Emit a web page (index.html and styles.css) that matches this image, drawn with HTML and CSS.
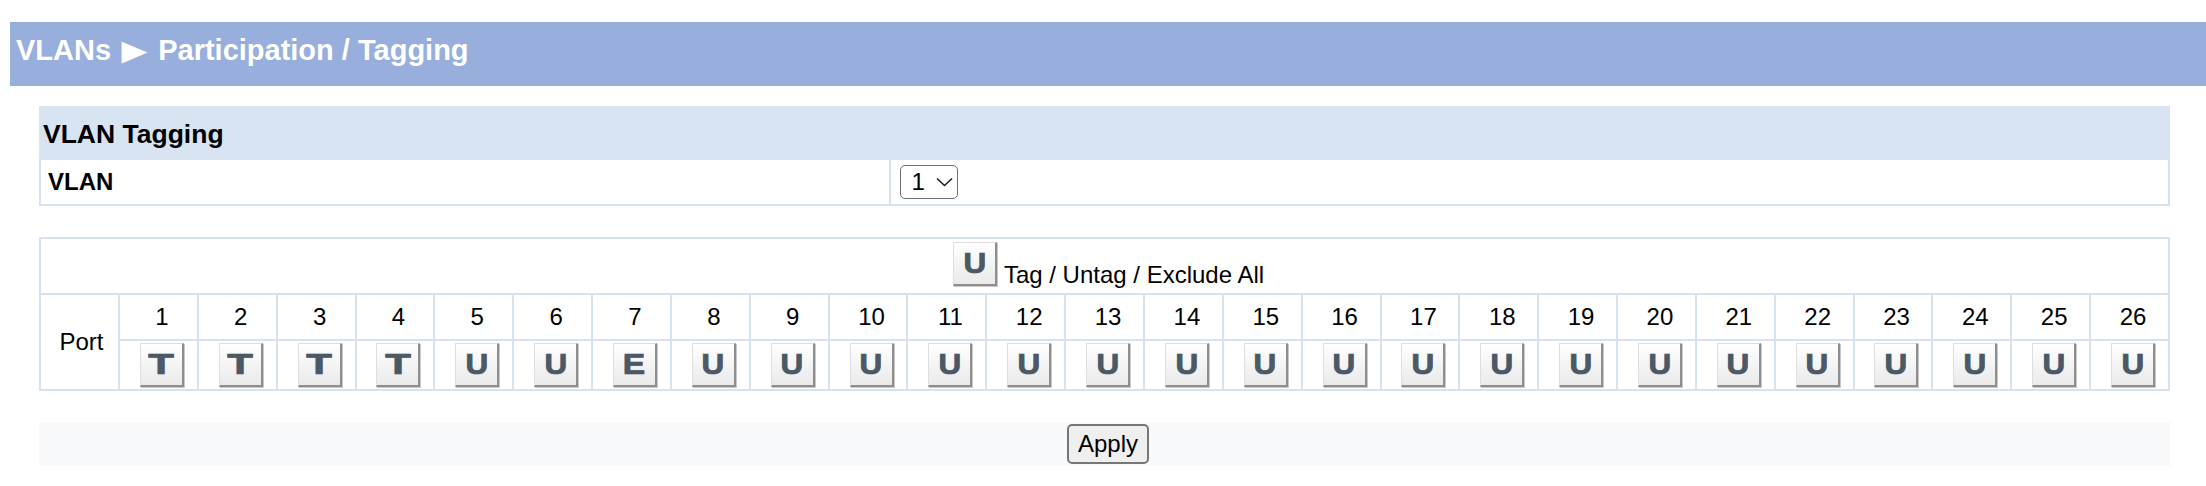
FILE: index.html
```html
<!DOCTYPE html>
<html lang="en">
<head>
<meta charset="utf-8">
<title>VLANs - Participation / Tagging</title>
<link rel="stylesheet" href="styles.css">
</head>
<body>
<h1 class="page-title">VLANs<span class="sep">▶</span>Participation / Tagging</h1>
<div class="content">
  <table class="panel">
    <tr><th colspan="2" class="panel-title">VLAN Tagging</th></tr>
    <tr>
      <td class="label">VLAN</td>
      <td class="value"><span class="select"><span class="select-text">1</span><svg class="chev" width="17" height="10" viewBox="0 0 17 10"><polyline points="1,1.5 8.5,8.5 16,1.5" fill="none" stroke="#1d1d1d" stroke-width="1.6"/></svg></span></td>
    </tr>
  </table>

  <table class="ports">
    <colgroup><col class="port-col"><col span="26"></colgroup>
    <tr>
      <td colspan="27" class="all"><span class="tbtn inline"><span class="ltr u">U</span></span>Tag / Untag / Exclude All</td>
    </tr>
    <tr>
      <th rowspan="2" class="port-label">Port</th>
      <td class="num">1</td><td class="num">2</td><td class="num">3</td><td class="num">4</td><td class="num">5</td><td class="num">6</td><td class="num">7</td><td class="num">8</td><td class="num">9</td><td class="num">10</td><td class="num">11</td><td class="num">12</td><td class="num">13</td><td class="num">14</td><td class="num">15</td><td class="num">16</td><td class="num">17</td><td class="num">18</td><td class="num">19</td><td class="num">20</td><td class="num">21</td><td class="num">22</td><td class="num">23</td><td class="num">24</td><td class="num">25</td><td class="num">26</td>
    </tr>
    <tr>
      <td class="cell"><span class="tbtn"><span class="ltr t">T</span></span></td>
      <td class="cell"><span class="tbtn"><span class="ltr t">T</span></span></td>
      <td class="cell"><span class="tbtn"><span class="ltr t">T</span></span></td>
      <td class="cell"><span class="tbtn"><span class="ltr t">T</span></span></td>
      <td class="cell"><span class="tbtn"><span class="ltr u">U</span></span></td>
      <td class="cell"><span class="tbtn"><span class="ltr u">U</span></span></td>
      <td class="cell"><span class="tbtn"><span class="ltr e">E</span></span></td>
      <td class="cell"><span class="tbtn"><span class="ltr u">U</span></span></td>
      <td class="cell"><span class="tbtn"><span class="ltr u">U</span></span></td>
      <td class="cell"><span class="tbtn"><span class="ltr u">U</span></span></td>
      <td class="cell"><span class="tbtn"><span class="ltr u">U</span></span></td>
      <td class="cell"><span class="tbtn"><span class="ltr u">U</span></span></td>
      <td class="cell"><span class="tbtn"><span class="ltr u">U</span></span></td>
      <td class="cell"><span class="tbtn"><span class="ltr u">U</span></span></td>
      <td class="cell"><span class="tbtn"><span class="ltr u">U</span></span></td>
      <td class="cell"><span class="tbtn"><span class="ltr u">U</span></span></td>
      <td class="cell"><span class="tbtn"><span class="ltr u">U</span></span></td>
      <td class="cell"><span class="tbtn"><span class="ltr u">U</span></span></td>
      <td class="cell"><span class="tbtn"><span class="ltr u">U</span></span></td>
      <td class="cell"><span class="tbtn"><span class="ltr u">U</span></span></td>
      <td class="cell"><span class="tbtn"><span class="ltr u">U</span></span></td>
      <td class="cell"><span class="tbtn"><span class="ltr u">U</span></span></td>
      <td class="cell"><span class="tbtn"><span class="ltr u">U</span></span></td>
      <td class="cell"><span class="tbtn"><span class="ltr u">U</span></span></td>
      <td class="cell"><span class="tbtn"><span class="ltr u">U</span></span></td>
      <td class="cell"><span class="tbtn"><span class="ltr u">U</span></span></td>
    </tr>
  </table>

  <div class="apply-bar"><button class="apply" type="button">Apply</button></div>
</div>
</body>
</html>
```

FILE: styles.css
```css
html, body {
  margin: 0;
  padding: 0;
  background: #ffffff;
}

body {
  font-family: "Liberation Sans", Arial, sans-serif;
  color: #000;
}

.page-title {
  margin: 22px 0 0 10px;
  height: 64px;
  box-sizing: border-box;
  padding: 12px 0 0 6px;
  background: #98aedc;
  color: #ffffff;
  font-size: 29px;
  line-height: 32px;
  font-weight: bold;
  white-space: nowrap;
}

.sep {
  display: inline-block;
  font-family: "DejaVu Sans", sans-serif;
  font-size: 30px;
  line-height: 32px;
  margin: 0 12px 0 12px;
  transform: scale(1.12, 0.95);
  transform-origin: 50% 65%;
}

.content {
  padding: 0 36px 0 39px;
  margin-top: 20px;
}

table {
  border-spacing: 0;
  border-collapse: separate;
}

/* ---------- VLAN Tagging panel ---------- */
.panel {
  width: 100%;
}

.panel-title {
  background: #d8e4f2;
  text-align: left;
  font-size: 26.5px;
  line-height: 30px;
  font-weight: bold;
  padding: 13px 4px 11px 4px;
}

.panel td {
  border-bottom: 2px solid #d6e2f0;
  box-sizing: border-box;
}

.label {
  width: 40%;
  border-left: 2px solid #d6e2f0;
  border-right: 2px solid #d6e2f0;
  font-size: 24px;
  font-weight: bold;
  padding: 0 7px;
  vertical-align: middle;
}

.value {
  border-right: 2px solid #d6e2f0;
  padding: 5px 8px 5px 9px;
  vertical-align: middle;
}

.select {
  display: inline-flex;
  align-items: center;
  box-sizing: border-box;
  width: 58px;
  height: 34px;
  border: 1.5px solid #6e6e6e;
  border-radius: 5px;
  padding: 0 0 0 10px;
  font-size: 24px;
  background: #fff;
}

.select-text {
  line-height: 1;
}

.chev {
  margin-left: 11px;
  display: block;
}

/* ---------- Port table ---------- */
.ports {
  margin-top: 31px;
  width: 100%;
  table-layout: fixed;
  border-top: 2px solid #d6e2f0;
  border-left: 2px solid #d6e2f0;
}

.port-col {
  width: 79px;
}

.ports td, .ports th {
  border-right: 2px solid #d6e2f0;
  border-bottom: 2px solid #d6e2f0;
  padding: 0;
  font-size: 24px;
  font-weight: normal;
}

.all {
  text-align: center;
  vertical-align: top;
  padding-top: 3px !important;
  padding-left: 8px !important;
  height: 51px;
  line-height: 27px;
  white-space: nowrap;
}

.port-label {
  text-align: center;
  vertical-align: middle;
  padding-left: 4px !important;
}

.num {
  height: 44px;
  text-align: center;
  vertical-align: middle;
  padding-left: 7px !important;
}

.cell {
  height: 48px;
  text-align: center;
  vertical-align: middle;
  padding-left: 7px !important;
}

.tbtn {
  display: block;
  margin: 0 auto;
  box-sizing: border-box;
  width: 44px;
  height: 44px;
  border-style: solid;
  border-width: 1px 2px 2px 1px;
  border-color: #dedede #8e8e8e #8e8e8e #dedede;
  background: linear-gradient(#ffffff, #f2f2f2 60%, #eaeaea);
  box-shadow: 1px 1px 0 #c9c9c9;
  text-align: center;
  overflow: hidden;
}

.tbtn.inline {
  display: inline-block;
  vertical-align: -3px;
  margin-right: 7px;
}

.ltr {
  display: inline-block;
  font-family: "Liberation Sans", Arial, sans-serif;
  font-weight: bold;
  font-size: 30px;
  line-height: 39px;
  color: #4b5866;
  -webkit-text-stroke: 0.7px #4b5866;
  text-shadow: 0 0 1px rgba(75, 88, 102, 0.6);
}

.ltr.t { transform: scaleX(1.4); }
.ltr.u { transform: scaleX(1.05); }
.ltr.e { transform: scaleX(1.12); }

/* ---------- Apply bar ---------- */
.apply-bar {
  margin-top: 31px;
  height: 44px;
  background: #f8f9fa;
  text-align: center;
  padding-left: 7px;
}

.apply {
  margin-top: 2px;
  font-family: "Liberation Sans", Arial, sans-serif;
  font-size: 24px;
  color: #000;
  padding: 4px 9px;
  border: 2px solid #767676;
  border-radius: 5px;
  background: #efefef;
}
```
